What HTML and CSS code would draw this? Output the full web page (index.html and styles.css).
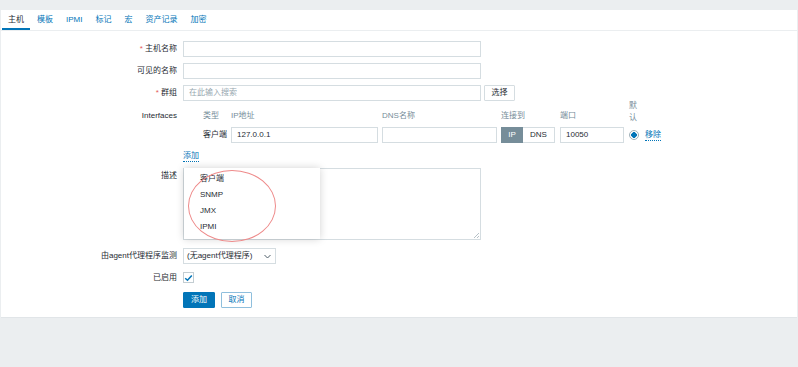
FILE: index.html
```html
<!DOCTYPE html>
<html>
<head>
<meta charset="utf-8">
<link rel="stylesheet" href="styles.css">
</head>
<body>
<div class="topbar"></div>
<div class="panel">
  <div class="tabs">
    <div class="tab active">主机</div>
    <div class="tab">模板</div>
    <div class="tab">IPMI</div>
    <div class="tab">标记</div>
    <div class="tab">宏</div>
    <div class="tab">资产记录</div>
    <div class="tab">加密</div>
  </div>
  <div class="form">
    <div class="row r-host">
      <div class="label"><span class="req">*</span> 主机名称</div>
      <div class="field"><div class="input wide"></div></div>
    </div>
    <div class="row r-visible">
      <div class="label">可见的名称</div>
      <div class="field"><div class="input wide"></div></div>
    </div>
    <div class="row r-group">
      <div class="label"><span class="req">*</span> 群组</div>
      <div class="field">
        <div class="input wide placeholder">在此输入搜索</div>
        <div class="btn-sel">选择</div>
      </div>
    </div>
    <div class="row r-if">
      <div class="label if-label">Interfaces</div>
      <div class="field">
        <div class="iftable">
          <div class="ifh c-type">类型</div>
          <div class="ifh c-ip">IP地址</div>
          <div class="ifh c-dns">DNS名称</div>
          <div class="ifh c-conn">连接到</div>
          <div class="ifh c-port">端口</div>
          <div class="ifh c-def">默<br>认</div>
          <div class="ifh c-rm"></div>

          <div class="c-type iftype">客户端</div>
          <div class="c-ip"><div class="input ipin">127.0.0.1</div></div>
          <div class="c-dns"><div class="input dnsin"></div></div>
          <div class="c-conn toggle"><span class="tg on">IP</span><span class="tg">DNS</span></div>
          <div class="c-port"><div class="input portin">10050</div></div>
          <div class="c-def"><span class="radio"></span></div>
          <div class="c-rm"><span class="link">移除</span></div>
        </div>
      </div>
    </div>
    <div class="row r-add">
      <div class="label"></div>
      <div class="field"><span class="link">添加</span></div>
    </div>
    <div class="row r-desc">
      <div class="label desc-label">描述</div>
      <div class="field"><div class="textarea"><span class="grip"></span></div></div>
    </div>
    <div class="row r-proxy">
      <div class="label">由agent代理程序监测</div>
      <div class="field"><div class="select">(无agent代理程序)<svg class="chev" width="7" height="5" viewBox="0 0 7 5"><path d="M0.5 1 L3.5 4 L6.5 1" fill="none" stroke="#4f5f68" stroke-width="1"/></svg></div></div>
    </div>
    <div class="row r-enabled">
      <div class="label">已启用</div>
      <div class="field"><div class="checkbox"><svg width="9" height="8" viewBox="0 0 9 8"><path d="M1.2 4.2 L3.5 6.3 L7.8 1.4" fill="none" stroke="#0275b8" stroke-width="1.5"/></svg></div></div>
    </div>
    <div class="row r-btn">
      <div class="label"></div>
      <div class="field">
        <div class="btn primary">添加</div>
        <div class="btn secondary">取消</div>
      </div>
    </div>
  </div>

  <div class="dropdown">
    <div class="dd-item">客户端</div>
    <div class="dd-item">SNMP</div>
    <div class="dd-item">JMX</div>
    <div class="dd-item">IPMI</div>
  </div>
  <div class="ellipse"></div>
</div>
</body>
</html>
```

FILE: styles.css
```css
* { box-sizing: border-box; }
html, body {
  margin: 0;
  padding: 0;
}
body {
  width: 798px;
  height: 367px;
  background: #ebeef0;
  font-family: "Liberation Sans", "Noto Sans CJK SC", sans-serif;
  font-size: 8px;
  color: #1f2c33;
  overflow: hidden;
}
.topbar {
  height: 10px;
  background: #ebeef0;
}
.panel {
  position: relative;
  margin: 0 1px;
  height: 308px;
  background: #ffffff;
  border-bottom: 1px solid #e1e5e8;
}
.tabs {
  display: flex;
  height: 21px;
  border-bottom: 1px solid #ebeef0;
}
.tab {
  padding: 0 6px;
  line-height: 19px;
  color: #0275b8;
  border-bottom: 2px solid transparent;
}
.tab:first-child { margin-left: 1px; }
.tab.active {
  color: #1f2c33;
  border-bottom-color: #0275b8;
}
.tab + .tab { margin-left: 1px; }

.form {
  display: flex;
  flex-direction: column;
  padding-top: 10px;
}
.row {
  display: flex;
  align-items: center;
}
.label {
  width: 176px;
  flex: none;
  text-align: right;
  margin-right: 6px;
  line-height: 16px;
}
.req { color: #e45959; }
.field {
  display: flex;
  align-items: center;
}
.input {
  height: 16px;
  border: 1px solid #d5dde1;
  background: #fff;
  line-height: 14px;
  padding-left: 5px;
  font-size: 8px;
}
.input.wide { width: 298px; }
.placeholder { color: #97a7af; }
.r-host { margin-bottom: 6px; }
.r-visible { margin-bottom: 6px; }
.r-group { margin-bottom: 4px; }
.btn-sel {
  margin-left: 3px;
  width: 31px;
  height: 16px;
  border: 1px solid #d5dde1;
  border-radius: 1px;
  text-align: center;
  line-height: 14px;
  background: #fff;
}

.r-if { align-items: flex-start; }
.if-label { line-height: 22px; }
.iftable {
  display: grid;
  grid-template-columns: 46px 149px 119px 58px 69px 15px 30px;
  grid-template-rows: 22px 16px;
  row-gap: 0;
}
.ifh {
  color: #768d99;
  align-self: center;
  line-height: 12px;
}
.ifh.c-def {
  align-self: end;
  padding-left: 5px;
  padding-bottom: 3px;
  white-space: nowrap;
}
.c-type { padding-left: 20px; }
.c-ip { padding-left: 2px; }
.c-dns { padding-left: 4px; }
.c-conn { padding-left: 4px; }
.c-port { padding-left: 5px; }
.iftype {
  line-height: 16px;
  white-space: nowrap;
}
.ipin { width: 147px; color: #1f2c33; }
.dnsin { width: 115px; }
.portin { width: 64px; }
.toggle { display: flex; }
.tg {
  height: 16px;
  line-height: 14px;
  border: 1px solid #d5dde1;
  text-align: center;
  background: #fff;
}
.tg.on {
  width: 22px;
  background: #768d99;
  border-color: #768d99;
  color: #fff;
}
.tg:not(.on) {
  width: 32px;
  border-left: none;
}
.c-def {
  display: flex;
  align-items: center;
  padding-left: 5px;
}
.radio {
  width: 10px;
  height: 10px;
  flex: none;
  border-radius: 50%;
  border: 1px solid #9fb0b8;
  background: radial-gradient(circle, #0275b8 0, #0275b8 2.6px, #fff 3px);
}
.c-rm {
  display: flex;
  align-items: center;
  padding-left: 6px;
}
.link {
  color: #0275b8;
  border-bottom: 1px dotted #0275b8;
  line-height: 10px;
  white-space: nowrap;
}
.r-add { margin-top: 6px; height: 14px; margin-bottom: 5px; }

.r-desc { align-items: flex-start; margin-bottom: 8px; }
.desc-label { line-height: 14px; margin-top: 1px; }
.textarea {
  position: relative;
  width: 298px;
  height: 72px;
  border: 1px solid #d5dde1;
}
.grip {
  position: absolute;
  right: 1px;
  bottom: 1px;
  width: 5px;
  height: 5px;
  background: linear-gradient(135deg, transparent 45%, #b7c2c8 45%, #b7c2c8 55%, transparent 55%, transparent 75%, #b7c2c8 75%, #b7c2c8 85%, transparent 85%);
}
.r-proxy { margin-bottom: 8px; }
.select {
  position: relative;
  width: 93px;
  height: 16px;
  border: 1px solid #d5dde1;
  line-height: 14px;
  padding-left: 3px;
}
.chev {
  position: absolute;
  right: 4px;
  top: 5px;
}
.r-enabled { margin-bottom: 9px; }
.checkbox {
  width: 11px;
  height: 11px;
  border: 1px solid #c3cdd2;
  display: flex;
  align-items: center;
  justify-content: center;
}
.r-enabled .label { line-height: 11px; }
.btn {
  height: 16px;
  line-height: 14px;
  text-align: center;
  border: 1px solid #0275b8;
  border-radius: 1px;
}
.btn.primary {
  width: 32px;
  background: #0275b8;
  color: #fff;
}
.btn.secondary {
  width: 31px;
  margin-left: 6px;
  background: #fff;
  color: #0275b8;
  border-color: #8fbfdd;
}

.dropdown {
  position: absolute;
  left: 183px;
  top: 158px;
  width: 136px;
  height: 71px;
  background: #fff;
  box-shadow: 0 0 8px rgba(0, 0, 0, 0.18);
  padding-top: 3px;
}
.dd-item {
  padding-left: 16px;
  line-height: 16px;
  color: #1f2c33;
}
.ellipse {
  position: absolute;
  left: 187px;
  top: 160px;
  width: 88px;
  height: 72px;
  border: 1px solid #ee8a8a;
  border-radius: 50%;
}
```
